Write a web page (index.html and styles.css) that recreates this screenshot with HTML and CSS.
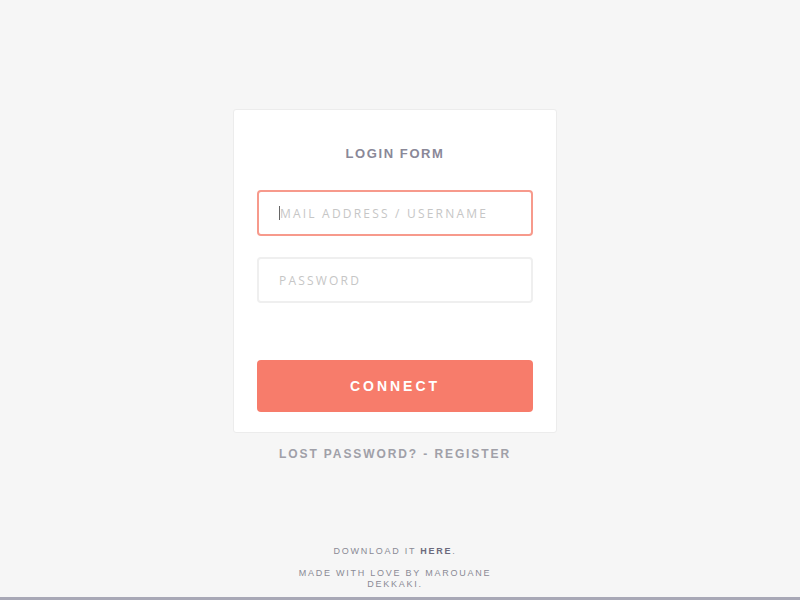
FILE: index.html
```html
<!DOCTYPE html>
<html>
<head>
<meta charset="utf-8">
<link rel="stylesheet" href="styles.css">
</head>
<body>
<div class="page">
  <main class="main">
    <form class="card">
      <h1 class="title">LOGIN FORM</h1>
      <div class="field focus"><span class="caret"></span><span class="ph">MAIL ADDRESS / USERNAME</span></div>
      <div class="field"><span class="ph">PASSWORD</span></div>
      <button class="btn" type="button">CONNECT</button>
    </form>
    <p class="links">LOST PASSWORD? - REGISTER</p>
  </main>
  <footer class="foot">
    <p class="dl">DOWNLOAD IT <b>HERE</b>.</p>
    <p class="made">MADE WITH LOVE BY MAROUANE DEKKAKI.</p>
  </footer>
</div>
<div class="bar"></div>
</body>
</html>
```
FILE: styles.css
```css
html, body { margin: 0; padding: 0; }
body {
  background: #f6f6f6;
  font-family: "Open Sans", "Liberation Sans", sans-serif;
  height: 600px;
  overflow: hidden;
  display: flex;
  flex-direction: column;
}
.page {
  flex: 1;
  display: flex;
  flex-direction: column;
  align-items: center;
  padding-right: 10px;
}
.main {
  padding-top: 109px;
  display: flex;
  flex-direction: column;
  align-items: center;
}
.card {
  width: 276px;
  padding: 0 23px 20px;
  background: #fff;
  border: 1px solid #ececec;
  border-radius: 3px;
  display: flex;
  flex-direction: column;
}
.title {
  margin: 36px 0 28px;
  text-align: center;
  font-family: "Liberation Sans", Arial, sans-serif;
  font-size: 13px;
  font-weight: bold;
  letter-spacing: 1.6px;
  color: #8a8898;
  line-height: 16px;
}
.field {
  height: 42px;
  border: 2px solid #efefef;
  border-radius: 4px;
  display: flex;
  align-items: center;
  padding-left: 20px;
  margin-bottom: 21px;
}
.field.focus {
  border-color: #f79a8c;
}
.caret {
  width: 1px;
  height: 14px;
  background: #666;
}
.ph {
  font-size: 12px;
  letter-spacing: 2.2px;
  color: #c6c6c6;
}
.btn {
  margin-top: 36px;
  height: 52px;
  border: none;
  border-radius: 4px;
  background: #f77c6b;
  color: #fff;
  font-family: "Liberation Sans", Arial, sans-serif;
  font-size: 14px;
  font-weight: bold;
  letter-spacing: 3px;
  padding: 0;
}
.links {
  margin: 14px 0 0;
  font-family: "Liberation Sans", Arial, sans-serif;
  font-size: 12px;
  font-weight: bold;
  letter-spacing: 1.9px;
  color: #a0a0a8;
}
.foot {
  margin-top: auto;
  width: 200px;
  text-align: center;
  font-family: "Liberation Sans", Arial, sans-serif;
  font-size: 9px;
  letter-spacing: 1.75px;
  color: #8a8a95;
  padding-bottom: 7px;
}
.foot p { margin: 0; line-height: 11px; }
.dl { margin-bottom: 11px !important; }
.dl b { color: #6c6a7c; }
.bar {
  height: 3px;
  background: #a8a8b6;
}
```
